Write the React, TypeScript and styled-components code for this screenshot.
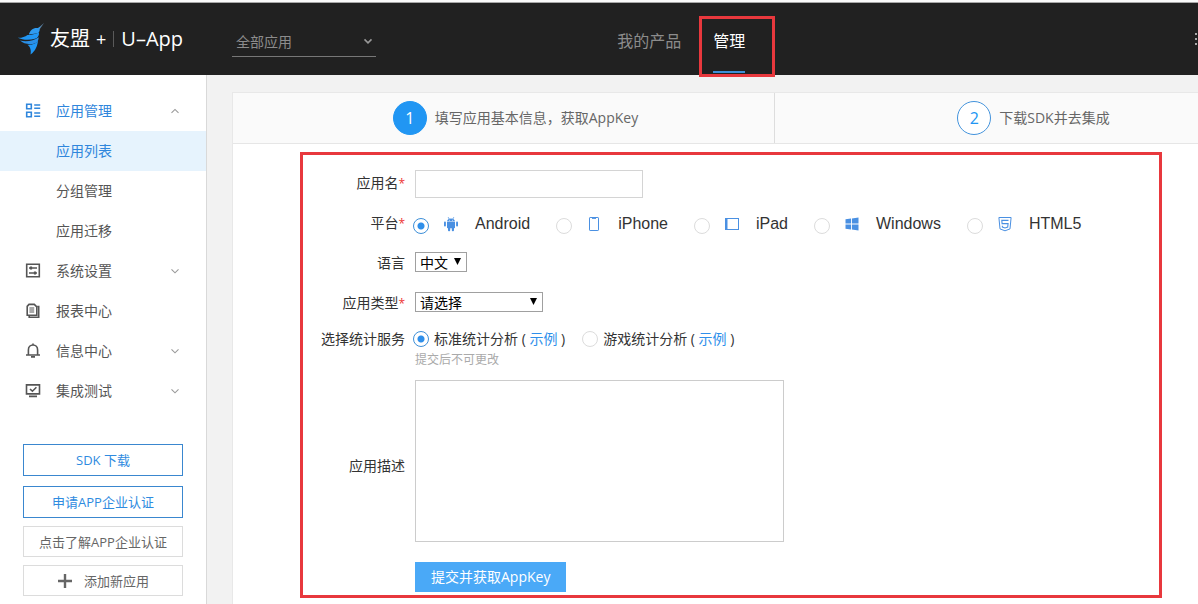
import React from "react";
import styled, { createGlobalStyle } from "styled-components";

const BLUE = "#2196f3";
const RED = "#e8383d";

const GlobalStyle = createGlobalStyle`
  *, *::before, *::after { box-sizing: border-box; }
  body {
    margin: 0;
    background: #f2f2f2;
    color: #333;
    font: 14px/20px "Open Sans", "Noto Sans CJK SC", sans-serif;
  }
  button, input, select, textarea { font: inherit; margin: 0; }
  a { color: #2f8fea; text-decoration: none; }
`;

const Page = styled.div`
  display: flex;
  flex-direction: column;
  min-height: 100vh;
  overflow: hidden;
  border-top: 2px solid #fafafa;
`;

/* ---------- header ---------- */

const Header = styled.header`
  display: flex;
  align-items: center;
  height: 73px;
  padding-left: 17px;
  background: #212121;
  border-top: 1px solid #a8a8a8;
`;

const Logo = styled.a`
  display: flex;
  align-items: center;
  width: 215px;
  color: #fff;
  font-size: 20px;
  line-height: 28px;
  white-space: nowrap;
`;

const LogoMark = styled.svg`
  width: 28px;
  height: 32px;
  margin-right: 5px;
`;

const LogoPlus = styled.span`
  margin-left: 6px;
  font-size: 18px;
`;

const LogoRule = styled.span`
  width: 1px;
  height: 16px;
  margin: 0 7px;
  background: #5a5a5a;
`;

const AppPicker = styled.label`
  display: flex;
  position: relative;
  width: 144px;
  margin-top: 6px;
  border-bottom: 1px solid #777;

  select {
    width: 100%;
    height: 29px;
    padding: 0 4px;
    border: 0;
    background: transparent;
    color: #8c8c8c;
    appearance: none;
  }
  svg {
    position: absolute;
    right: 3px;
    top: 9px;
    color: #999;
    pointer-events: none;
  }
`;

const TopNav = styled.nav`
  display: flex;
  align-self: stretch;
  gap: 32px;
  margin-left: calc(20% + 5px);
  font-size: 16px;
`;

const TopLink = styled.a<{ $active?: boolean }>`
  position: relative;
  display: flex;
  align-items: center;
  padding-top: 4px;
  color: ${(p) => (p.$active ? "#fff" : "#8c8c8c")};

  &::before {
    content: "";
    display: ${(p) => (p.$active ? "block" : "none")};
    position: absolute;
    left: 0;
    right: 0;
    bottom: 2px;
    height: 2px;
    background: #3d8fd8;
  }
`;

const TabMarker = styled.span`
  position: absolute;
  inset: 13px -30px -2px -14px;
  border: 3px solid ${RED};
`;

const MoreButton = styled.button`
  display: flex;
  margin-left: auto;
  padding: 0;
  border: 0;
  background: none;
  color: #a8a8a8;
`;

/* ---------- sidebar ---------- */

const Body = styled.div`
  display: flex;
  flex: 1;
`;

const Sidebar = styled.aside`
  flex: 0 0 207px;
  padding-top: 16px;
  background: #fff;
  border-right: 1px solid #d9d9d9;
`;

const Menu = styled.ul`
  margin: 0;
  padding: 0;
  list-style: none;
`;

const MenuLink = styled.a<{ $tone?: "open" | "selected" }>`
  display: flex;
  align-items: center;
  height: 40px;
  padding: 0 26px 0 25px;
  color: ${(p) => (p.$tone ? "#2f86dc" : "#555")};
  background: ${(p) => (p.$tone === "selected" ? "#e6f3fd" : "transparent")};
`;

const MenuIcon = styled.span`
  display: flex;
  width: 31px;
`;

const MenuChevron = styled.span`
  display: flex;
  margin-left: auto;
  color: #999;
`;

const SideActions = styled.div`
  display: grid;
  gap: 8px;
  padding: 33px 23px 6px;
`;

const ActionGroup = styled.div<{ $gap: number }>`
  display: grid;
  gap: ${(p) => p.$gap}px;
`;

const SideButton = styled.button<{ $primary?: boolean }>`
  display: flex;
  align-items: center;
  justify-content: center;
  gap: 11px;
  height: ${(p) => (p.$primary ? 32 : 31)}px;
  padding: 0;
  border: 1px solid ${(p) => (p.$primary ? "#3a87cf" : "#dcdcdc")};
  background: #fff;
  color: ${(p) => (p.$primary ? "#2f8be0" : "#666")};
  font-size: 13px;
  white-space: nowrap;
`;

/* ---------- main ---------- */

const Main = styled.main`
  flex: 1;
  min-width: 0;
  display: flex;
  flex-direction: column;
  margin: 17px 0 0 25px;
  background: #fff;
  border: solid #e8e8e8;
  border-width: 1px 0 0 1px;
`;

const Steps = styled.ol`
  display: grid;
  grid-template-columns: 37fr 29fr;
  margin: 0;
  padding: 0;
  list-style: none;
  background: #fafafa;
  border-bottom: 1px solid #e6e6e6;
`;

const Step = styled.li<{ $shift: number }>`
  display: flex;
  align-items: center;
  justify-content: center;
  gap: 8px;
  height: 50px;
  padding-left: ${(p) => p.$shift}px;
  color: #666;

  & + & { border-left: 1px solid #ddd; }
`;

const StepNumber = styled.span<{ $active?: boolean }>`
  display: flex;
  align-items: center;
  justify-content: center;
  width: 34px;
  height: 34px;
  border: 1px solid ${(p) => (p.$active ? BLUE : "#4393dc")};
  border-radius: 50%;
  background: ${(p) => (p.$active ? BLUE : "#fff")};
  color: ${(p) => (p.$active ? "#fff" : BLUE)};
  font-size: 16px;
`;

const Form = styled.form`
  display: grid;
  gap: 12px;
  margin: 8px 36px 0 67px;
  padding: 15px 0 3px;
  border: 3px solid ${RED};
`;

const FieldLabel = styled.label`
  text-align: right;
  white-space: nowrap;
`;

const Row = styled.div<{ $middle?: boolean; $tight?: boolean }>`
  display: grid;
  grid-template-columns: 102px 1fr;
  column-gap: 10px;
  align-items: ${(p) => (p.$middle ? "center" : "start")};
  min-height: ${(p) => (p.$tight ? 18 : 28)}px;
  line-height: ${(p) => (p.$tight ? 18 : 26)}px;

  ${FieldLabel} { padding-top: ${(p) => (p.$middle ? 10 : 0)}px; }
`;

const Star = styled.span`
  color: #e33;
  font-size: 12px;
  line-height: 12px;
`;

const TextBox = styled.input`
  width: 228px;
  height: 28px;
  padding: 0 6px;
  border: 1px solid #d4d4d4;
`;

const SelectBox = styled.span<{ $width: number }>`
  display: block;
  position: relative;
  width: ${(p) => p.$width}px;
  height: 20px;
  margin-top: 2px;

  select {
    display: block;
    width: 100%;
    height: 20px;
    padding: 2px 4px 0;
    border: 1px solid #a0a0a0;
    border-radius: 0;
    background: #fff;
    color: #000;
    line-height: 16px;
    appearance: none;
  }
  svg {
    position: absolute;
    right: 6px;
    top: 6px;
    pointer-events: none;
  }
`;

const Options = styled.div<{ $gap: number }>`
  display: flex;
  gap: ${(p) => p.$gap}px;
  margin-left: -2px;
  white-space: nowrap;
`;

const Radio = styled.input`
  flex: none;
  width: 16px;
  height: 16px;
  border: 1px solid #dcdcdc;
  border-radius: 50%;
  background: #fff;
  appearance: none;

  &:checked {
    border-color: #3d8fd8;
    background: radial-gradient(circle, #2f8fea 3px, #fff 4px);
  }
`;

const Platform = styled.label`
  display: flex;
  align-items: center;
  color: #333;
  font: 16px/28px "Liberation Sans", sans-serif;

  ${Radio} { margin-top: 4px; }
  svg { margin: 0 16px 0 14px; color: #4a90e2; }
`;

const Service = styled.span`
  display: flex;
  align-items: center;
  gap: 5px;
`;

const Hint = styled.p`
  margin: 0;
  padding-top: 4px;
  color: #aaa;
  font-size: 12px;
  line-height: 16px;
`;

const Description = styled.textarea`
  display: block;
  width: 369px;
  height: 162px;
  border: 1px solid #ccc;
  resize: none;
`;

const Submit = styled.button`
  justify-self: start;
  height: 30px;
  margin: 8px 0 0 112px;
  padding: 0 16px;
  border: 0;
  background: #4aa9f7;
  color: #fff;
`;

/* ---------- icons ---------- */

const Icon = ({ children }: { children: React.ReactNode }) => (
  <svg width="16" height="16" viewBox="0 0 16 16" fill="none" stroke="currentColor" strokeWidth="1.6" aria-hidden="true">
    {children}
  </svg>
);

const Chevron = ({ up, bold }: { up?: boolean; bold?: boolean }) => (
  <svg width="10" height="10" viewBox="0 0 10 10" fill="none" stroke="currentColor" strokeWidth={bold ? 1.6 : 1.1} aria-hidden="true">
    <path d={up ? "M1.5 6.8 5 3.4l3.5 3.4" : "M1.5 3.4 5 6.8l3.5-3.4"} />
  </svg>
);

const Arrow = () => (
  <svg width="7" height="7" viewBox="0 0 7 7" aria-hidden="true">
    <path d="M0 0h7L3.5 7z" fill="#000" />
  </svg>
);

const GridIcon = () => (
  <Icon>
    <path d="M1.7 1.2h4.6v4.6H1.7zM1.7 9.2h4.6v4.6H1.7zM9.2 2h6M9.2 5.2h6M9.2 10h6M9.2 13.2h6" />
  </Icon>
);

const SettingsIcon = () => (
  <Icon>
    <path d="M1.7 1.2h12.6v12.6H1.7z" />
    <path d="M4 5h8M4 10h8" strokeWidth="1.3" />
    <path d="M6 3.5v3M10 8.5v3" strokeWidth="2.2" />
  </Icon>
);

const ReportIcon = () => (
  <Icon>
    <path d="M2.2 3.4 4 1.4h5.3l2.5 2.4v8.4H2.2z" />
    <path d="M4.4 5h4.8M4.4 7h4.8M4.4 9h4.8" strokeWidth="1.2" />
    <path d="M12.2 3.5h1.5v10.7H4.2v-1.8" />
  </Icon>
);

const BellIcon = () => (
  <Icon>
    <path d="M1 12h14M3.4 11.7V7c0-3 2-5 4.6-5s4.6 2 4.6 5v4.7M8 .4V2M6 13.9h4" />
  </Icon>
);

const TestIcon = () => (
  <Icon>
    <path d="M1.5 1.9h13v9h-13zM4 13.4h8M5 6l2.4 2.2 4-4" />
  </Icon>
);

const PlusIcon = () => (
  <Icon>
    <path d="M8 1v14M1 8h14" strokeWidth="2.4" />
  </Icon>
);

const AndroidIcon = () => (
  <Icon>
    <g fill="currentColor" stroke="none">
      <path d="M4 5.4C4.2 3.6 5.8 2.5 8 2.5s3.8 1.1 4 2.9zM4 6h8v5.5c0 .5-.3.8-.8.8H4.8c-.5 0-.8-.3-.8-.8z" />
      <rect x="1" y="5.5" width="1.9" height="5" rx=".9" />
      <rect x="13.1" y="5.5" width="1.9" height="5" rx=".9" />
      <rect x="5" y="11" width="2.2" height="4.2" rx=".9" />
      <rect x="8.8" y="11" width="2.2" height="4.2" rx=".9" />
    </g>
    <path d="M5.2 1.2 6.2 3M10.8 1.2 9.8 3" strokeWidth=".8" />
    <path d="M6 4.3h.8M9.2 4.3h.8" stroke="#fff" strokeWidth=".8" />
  </Icon>
);

const PhoneIcon = () => (
  <Icon>
    <rect x="3.5" y="1.5" width="9" height="13" rx=".6" strokeWidth="1" />
    <path d="M6 2.2h4" strokeWidth="1.4" />
  </Icon>
);

const PadIcon = () => (
  <Icon>
    <rect x="1.5" y="2.5" width="13" height="11" strokeWidth="1" />
    <path d="M2.5 3v10" strokeWidth="2" />
  </Icon>
);

const WindowsIcon = () => (
  <Icon>
    <path d="M1.5 3.2 7 2.5v5H1.5zM7.9 2.4 14.5 1.5v6H7.9zM1.5 8.4H7v5l-5.5-.7zM7.9 8.4h6.6v6l-6.6-.9z" fill="currentColor" stroke="none" />
  </Icon>
);

const HtmlIcon = () => (
  <Icon>
    <path d="M1.9 1.5h12.2L13 12.900l-5 1.900-5-1.900z" strokeWidth="1" />
    <path d="M11.5 4.4H4.8l.3 3.2h6l-.4 3.5-2.7.9-2.6-.9-.1-1.3" strokeWidth="1.1" />
  </Icon>
);

/* ---------- data ---------- */

type MenuItem = {
  text: string;
  icon?: React.ReactNode;
  chevron?: "up" | "down";
  tone?: "open" | "selected";
};

const menu: MenuItem[] = [
  { text: "应用管理", icon: <GridIcon />, chevron: "up", tone: "open" },
  { text: "应用列表", tone: "selected" },
  { text: "分组管理" },
  { text: "应用迁移" },
  { text: "系统设置", icon: <SettingsIcon />, chevron: "down" },
  { text: "报表中心", icon: <ReportIcon /> },
  { text: "信息中心", icon: <BellIcon />, chevron: "down" },
  { text: "集成测试", icon: <TestIcon />, chevron: "down" },
];

const platforms = [
  { name: "Android", icon: <AndroidIcon /> },
  { name: "iPhone", icon: <PhoneIcon /> },
  { name: "iPad", icon: <PadIcon /> },
  { name: "Windows", icon: <WindowsIcon /> },
  { name: "HTML5", icon: <HtmlIcon /> },
];

const services = [
  { id: "standard", name: "标准统计分析" },
  { id: "game", name: "游戏统计分析" },
];

export default function App() {
  return (
    <Page>
      <GlobalStyle />
      <Header>
        <Logo href="#">
          <LogoMark viewBox="0 0 28 32" aria-hidden="true">
            <path d="M27 0 22.5 6.5 21 5.2z" fill="#5b7f9e" />
            <path d="M23.5 3.5 21 5C16.5 4.3 13 7 11.8 11.5l9-1.3c1.8-1 2.2-3.2 1.7-4.5z" fill="#2f9bf0" />
            <path d="M10.5 12C14 11.9 19 11 22 9.4c.3 3-1.3 5.6-4 6.4-6 1.7-12.6 1.2-17.3-1 3.5.3 7-.7 9.8-2.8z" fill="#2196f3" />
            <path d="M3 17.6c6 1.3 13.5.7 18.600-3.400.2 3.800-2.200 6.400-6 6.800-5 .5-9.600-.4-12.600-3.400z" fill="#2a8fe6" />
            <path d="M10.5 21.7c4.5.4 8.5-.8 10.5-4.3-.4 5-2.5 10.6-7.5 14.1.8-3.5.2-7.3-3-9.8z" fill="#2196f3" />
          </LogoMark>
          友盟<LogoPlus>+</LogoPlus>
          <LogoRule />
          U–App
        </Logo>
        <AppPicker>
          <select aria-label="应用">
            <option>全部应用</option>
          </select>
          <Chevron bold />
        </AppPicker>
        <TopNav>
          <TopLink href="#">我的产品</TopLink>
          <TopLink href="#" $active>
            管理
            <TabMarker />
          </TopLink>
        </TopNav>
        <MoreButton type="button" aria-label="更多">
          <svg width="4" height="14" viewBox="0 0 4 14" fill="currentColor" aria-hidden="true">
            <path d="M1 1h2v2H1zM1 6h2v2H1zM1 11h2v2H1z" />
          </svg>
        </MoreButton>
      </Header>

      <Body>
        <Sidebar>
          <Menu>
            {menu.map((item) => (
              <li key={item.text}>
                <MenuLink href="#" $tone={item.tone}>
                  <MenuIcon>{item.icon}</MenuIcon>
                  {item.text}
                  {item.chevron && (
                    <MenuChevron>
                      <Chevron up={item.chevron === "up"} />
                    </MenuChevron>
                  )}
                </MenuLink>
              </li>
            ))}
          </Menu>
          <SideActions>
            <ActionGroup $gap={10}>
              <SideButton type="button" $primary>SDK 下载</SideButton>
              <SideButton type="button" $primary>申请APP企业认证</SideButton>
            </ActionGroup>
            <ActionGroup $gap={8}>
              <SideButton type="button">点击了解APP企业认证</SideButton>
              <SideButton type="button">
                <PlusIcon />
                添加新应用
              </SideButton>
            </ActionGroup>
          </SideActions>
        </Sidebar>

        <Main>
          <Steps>
            <Step $shift={24}>
              <StepNumber $active>1</StepNumber>
              填写应用基本信息，获取AppKey
            </Step>
            <Step $shift={94}>
              <StepNumber>2</StepNumber>
              下载SDK并去集成
            </Step>
          </Steps>

          <Form>
            <Row>
              <FieldLabel htmlFor="name">应用名<Star>*</Star></FieldLabel>
              <TextBox id="name" type="text" />
            </Row>
            <Row role="radiogroup" aria-labelledby="platform-label">
              <FieldLabel as="span" id="platform-label">平台<Star>*</Star></FieldLabel>
              <Options $gap={26}>
                {platforms.map((p, i) => (
                  <Platform key={p.name}>
                    <Radio type="radio" name="platform" defaultChecked={i === 0} />
                    {p.icon}
                    {p.name}
                  </Platform>
                ))}
              </Options>
            </Row>
            <Row>
              <FieldLabel htmlFor="language">语言</FieldLabel>
              <SelectBox $width={52}>
                <select id="language"><option>中文</option></select>
                <Arrow />
              </SelectBox>
            </Row>
            <Row>
              <FieldLabel htmlFor="category">应用类型<Star>*</Star></FieldLabel>
              <SelectBox $width={128}>
                <select id="category"><option>请选择</option></select>
                <Arrow />
              </SelectBox>
            </Row>
            <Row $tight role="radiogroup" aria-labelledby="service-label">
              <FieldLabel as="span" id="service-label">选择统计服务</FieldLabel>
              <div>
                <Options $gap={17}>
                  {services.map((s, i) => (
                    <Service key={s.id}>
                      <Radio type="radio" name="service" id={s.id} defaultChecked={i === 0} />
                      <span>
                        <label htmlFor={s.id}>{s.name}</label> ( <a href="#">示例</a> )
                      </span>
                    </Service>
                  ))}
                </Options>
                <Hint>提交后不可更改</Hint>
              </div>
            </Row>
            <Row $middle>
              <FieldLabel htmlFor="description">应用描述</FieldLabel>
              <Description id="description" />
            </Row>
            <Submit type="submit">提交并获取AppKey</Submit>
          </Form>
        </Main>
      </Body>
    </Page>
  );
}
